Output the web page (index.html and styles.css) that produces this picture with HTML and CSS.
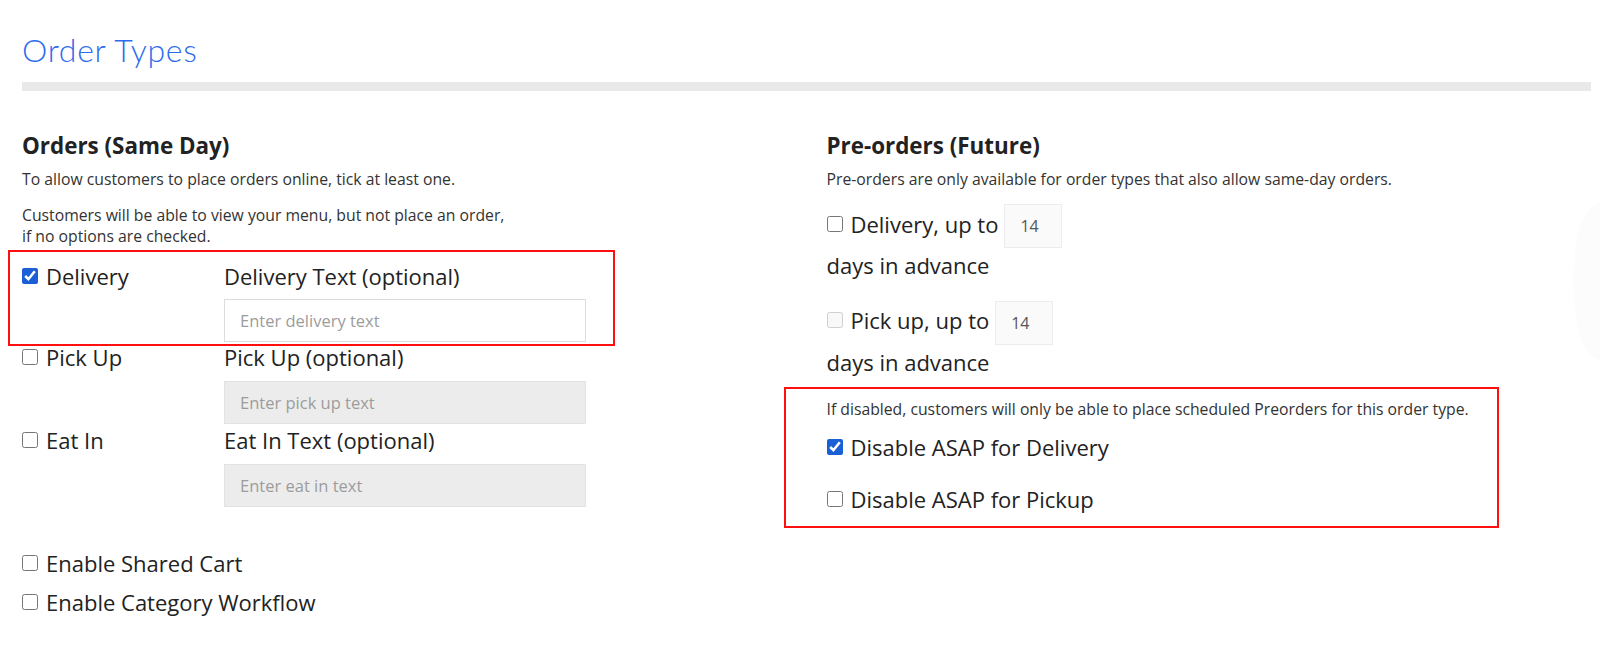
FILE: index.html
```html
<!DOCTYPE html>
<html lang="en">
<head>
<meta charset="utf-8">
<title>Order Types</title>
<link rel="stylesheet" href="styles.css">
</head>
<body>
<div class="page">
  <h1 class="title">Order Types</h1>
  <div class="bar"></div>
  <div class="cols">
    <section class="col">
      <h2 class="heading">Orders (Same Day)</h2>
      <p class="desc first">To allow customers to place orders online, tick at least one.</p>
      <p class="desc second">Customers will be able to view your menu, but not place an order,<br>if no options are checked.</p>
      <div class="types">
        <div class="type-row highlight">
          <label class="check"><input type="checkbox" checked><span>Delivery</span></label>
          <div class="field">
            <div class="field-label">Delivery Text (optional)</div>
            <input class="text-input" type="text" placeholder="Enter delivery text">
          </div>
        </div>
        <div class="type-row">
          <label class="check"><input type="checkbox"><span>Pick Up</span></label>
          <div class="field">
            <div class="field-label">Pick Up (optional)</div>
            <input class="text-input" type="text" placeholder="Enter pick up text" disabled>
          </div>
        </div>
        <div class="type-row spaced">
          <label class="check"><input type="checkbox"><span>Eat In</span></label>
          <div class="field">
            <div class="field-label">Eat In Text (optional)</div>
            <input class="text-input" type="text" placeholder="Enter eat in text" disabled>
          </div>
        </div>
      </div>
      <div class="extras">
        <label class="check"><input type="checkbox"><span>Enable Shared Cart</span></label>
        <label class="check"><input type="checkbox"><span>Enable Category Workflow</span></label>
      </div>
    </section>
    <section class="col">
      <h2 class="heading">Pre-orders (Future)</h2>
      <p class="desc first">Pre-orders are only available for order types that also allow same-day orders.</p>
      <div class="pre-row">
        <label class="check"><input type="checkbox"><span>Delivery, up to</span></label>
        <input class="days-input" type="text" value="14">
      </div>
      <div class="days">days in advance</div>
      <div class="pre-row second">
        <label class="check"><input type="checkbox" disabled><span>Pick up, up to</span></label>
        <input class="days-input" type="text" value="14">
      </div>
      <div class="days">days in advance</div>
      <div class="asap-box">
        <p class="desc">If disabled, customers will only be able to place scheduled Preorders for this order type.</p>
        <label class="check asap-first"><input type="checkbox" checked><span>Disable ASAP for Delivery</span></label>
        <label class="check asap-second"><input type="checkbox"><span>Disable ASAP for Pickup</span></label>
      </div>
    </section>
  </div>
</div>
<div class="edge-glow"></div>
</body>
</html>
```
FILE: styles.css
```css
html, body {
  margin: 0;
  padding: 0;
  background: #ffffff;
  overflow: hidden;
}

body {
  font-family: "Open Sans", "Noto Sans", sans-serif;
  color: #222222;
  position: relative;
  min-height: 655px;
}

.page {
  padding: 30px 9px 0 22px;
}

.title {
  margin: 0;
  font-family: Lato, "Open Sans", sans-serif;
  font-weight: 300;
  font-size: 32px;
  line-height: 40px;
  letter-spacing: 0.7px;
  color: #2d6cee;
}

.bar {
  margin-top: 12px;
  height: 9px;
  background: #e9e9e9;
}

.cols {
  display: grid;
  grid-template-columns: 804.5px 1fr;
  margin-top: 40px;
}

.heading {
  margin: 0;
  font-weight: 700;
  font-size: 22.4px;
  line-height: 30px;
  color: #222222;
}

.desc {
  margin: 0;
  font-size: 15.75px;
  line-height: 21px;
  color: #333333;
}

.desc.first {
  margin-top: 8px;
}

.desc.second {
  margin-top: 15px;
}

.types {
  margin-top: 3px;
}

.type-row {
  display: grid;
  grid-template-columns: 202px 362px;
}

.type-row.spaced {
  margin-top: 5.5px;
}

.type-row.highlight {
  width: 607px;
  box-sizing: border-box;
  margin-left: -14px;
  padding: 12.5px 0 2px 12px;
  border: 2px solid #ff0f0f;
}

.check {
  display: flex;
  align-items: center;
  gap: 8px;
  font-size: 22px;
  line-height: 22px;
  height: 22px;
  color: #222222;
  white-space: nowrap;
}

.check input {
  width: 16px;
  height: 16px;
  margin: 0;
  flex: none;
  accent-color: #1b5fd6;
}

.field-label {
  font-size: 22px;
  line-height: 22px;
  color: #222222;
}

.text-input {
  display: block;
  box-sizing: border-box;
  margin-top: 12.5px;
  width: 362px;
  height: 43px;
  padding: 0 15px;
  border: 1px solid #dcdcdc;
  background: #ffffff;
  font-family: "Open Sans", sans-serif;
  font-size: 16.5px;
  color: #333333;
  outline: none;
}

.text-input:disabled {
  background: #ececec;
  border-color: #e2e2e2;
}

.text-input::placeholder {
  color: #9c9c9c;
}

.extras {
  margin-top: 45px;
  display: flex;
  flex-direction: column;
  gap: 17px;
}

.pre-row {
  display: flex;
  align-items: center;
  gap: 6px;
  margin-top: 14px;
  height: 44px;
}

.pre-row.second {
  margin-top: 24.5px;
}

.pre-row .check {
  margin-bottom: 5px;
}

.days-input {
  box-sizing: border-box;
  width: 58px;
  height: 44px;
  padding: 0 0 0 15px;
  border: 1px solid #ececec;
  background: #fafafa;
  font-family: "Open Sans", sans-serif;
  font-size: 16px;
  color: #555555;
  outline: none;
}

.days {
  margin-top: 6px;
  font-size: 22px;
  line-height: 22px;
  color: #222222;
}

.asap-box {
  width: 715px;
  box-sizing: border-box;
  margin-top: 14px;
  margin-left: -42.5px;
  padding: 10px 0 16px 40.5px;
  border: 2px solid #ff0f0f;
}

.asap-first {
  margin-top: 16.5px;
}

.asap-second {
  margin-top: 30px;
}

.edge-glow {
  position: absolute;
  left: 1574px;
  top: 203px;
  width: 26px;
  height: 157px;
  border-radius: 30px 0 0 30px / 78px 0 0 78px;
  background: rgba(0, 0, 0, 0.012);
}
```
